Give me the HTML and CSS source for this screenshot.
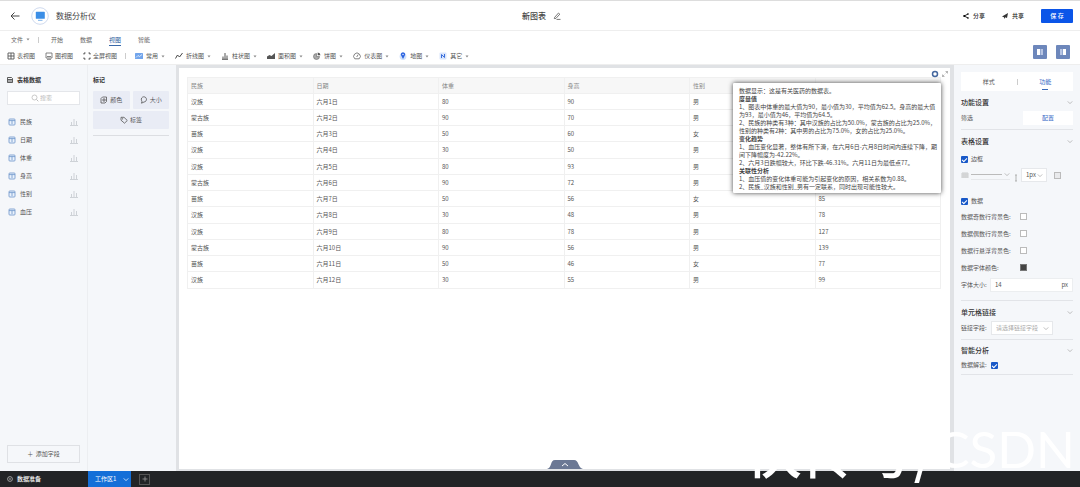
FILE: index.html
```html
<!DOCTYPE html>
<html>
<head>
<meta charset="utf-8">
<title>数据分析仪</title>
<link rel="stylesheet" href="styles.css">
</head>
<body>
<svg class="defs" aria-hidden="true">
  <symbol id="caret" viewBox="0 0 4 3"><path d="M.5 .5h3L2 2.4z" fill="#888"/></symbol>
  <symbol id="chev" viewBox="0 0 8 6"><path d="M1 1.5l3 3 3-3" fill="none" stroke="currentColor"/></symbol>
  <symbol id="bars" viewBox="0 0 8 8"><path d="M1.500 7V4M4 7V1M6.500 7V3M0 7.500h8" fill="none" stroke="currentColor" stroke-width=".8"/></symbol>
  <symbol id="field" viewBox="0 0 8 8"><rect x="1" y="1" width="6" height="6" rx=".8" fill="#eaf2fc" stroke="#6b93c9" stroke-width=".8"/><path d="M1 2.600h6M4 2.600v3.400" stroke="#6b93c9" stroke-width=".8"/></symbol>
</svg>
<div class="app">
  <header class="topbar">
    <div class="brand">
      <button class="plain" aria-label="返回"><svg class="back" viewBox="0 0 10 8"><path d="M4.500 .5L1 4l3.500 3.500M1 4h8.500" fill="none" stroke="#444"/></svg></button>
      <svg class="logo" viewBox="0 0 18 18"><circle cx="9" cy="9" r="8.300" fill="#fff" stroke="#c3d0ea" stroke-width=".8"/><rect x="4.800" y="4.800" width="9" height="7" rx=".6" fill="#3b8ee6"/><path d="M7 13.300h4.500" stroke="#7fb3ea" stroke-width="1"/></svg>
      <span>数据分析仪</span>
    </div>
    <div class="doc"><span>新图表</span><button class="plain" aria-label="重命名"><svg class="i8" viewBox="0 0 8 8"><path d="M1.500 5.500L5.500 1l1.300 1.200L3 6.300l-1.700.3zM3.500 7.400h4" fill="none" stroke="#555" stroke-width=".8"/></svg></button></div>
    <div class="actions">
      <button class="plain"><svg class="i6" viewBox="0 0 6 6"><path d="M5 1L1.200 3 5 5" fill="none" stroke="#222"/><circle cx="1.200" cy="3" r="1"/><circle cx="5" cy="1" r=".8"/><circle cx="5" cy="5" r=".8"/></svg>分享</button>
      <button class="plain"><svg class="i6" viewBox="0 0 6 6"><path d="M0 3.500L6 0 5 5 3.300 4.300 2.300 6 2 4.200z" fill="#333"/></svg>共享</button>
      <button class="save">保 存</button>
    </div>
  </header>
  <nav class="menu">
    <button class="plain">文件 <svg class="caret"><use href="#caret"/></svg></button>
    <i class="sep"></i>
    <div class="tabs">
      <button class="plain">开始</button><button class="plain">数据</button><button class="plain on">视图</button><button class="plain">智能</button>
    </div>
  </nav>
  <div class="tools">
    <div class="views">
      <button class="plain"><svg class="i8" viewBox="0 0 8 8"><path d="M1 1h6v6H1zM1 4h6M4 1v6" fill="none" stroke="#555" stroke-width=".9"/></svg>表视图</button>
      <button class="plain"><svg class="i8" viewBox="0 0 8 8"><path d="M1 1h6v5H1zM2 4.500h4M2 7.300h4" fill="none" stroke="#666" stroke-width=".8"/></svg>图视图</button>
      <button class="plain"><svg class="i8" viewBox="0 0 8 8"><path d="M1 2.500V1h1.500M5.500 1H7v1.500M7 5.500V7H5.500M2.500 7H1V5.500" fill="none" stroke="#444"/></svg>全屏视图</button>
    </div>
    <i class="sep"></i>
    <div class="charts">
      <button class="plain"><svg class="i8" viewBox="0 0 8 8"><rect y="1" width="8" height="6" rx=".6" fill="#72a5ec"/><path d="M1 5.500l2-2 1.500 1L7 2.500" fill="none" stroke="#fff" stroke-width=".7"/></svg>常用<svg class="caret"><use href="#caret"/></svg></button>
      <button class="plain"><svg class="i8" viewBox="0 0 8 8"><path d="M.5 6.500L2.500 3l2 2L7.500 1" fill="none" stroke="#444"/></svg>折线图<svg class="caret"><use href="#caret"/></svg></button>
      <button class="plain"><svg class="i8" viewBox="0 0 8 8"><path d="M2 7V4.500M4 7V1M6 7V3.500M1 7.300h6" fill="none" stroke="#555"/></svg>柱状图<svg class="caret"><use href="#caret"/></svg></button>
      <button class="plain"><svg class="i8" viewBox="0 0 8 8"><path d="M0 7V4.500L2.500 3 4.500 4 8 1v6z" fill="#555"/></svg>面积图<svg class="caret"><use href="#caret"/></svg></button>
      <button class="plain"><svg class="i8" viewBox="0 0 8 8"><path d="M3.500 1.500v3h3a3 3 0 1 1-3-3z" fill="#aaa" stroke="#666" stroke-width=".6"/><path d="M4.700 .5v2.700h2.800A3 3 0 0 0 4.700 .5z" fill="#555"/></svg>饼图<svg class="caret"><use href="#caret"/></svg></button>
      <button class="plain"><svg class="i8" viewBox="0 0 8 8"><path d="M1.800 6.800a3.300 3.300 0 1 1 4.400 0zM3.700 5L5.200 2.500" fill="none" stroke="#666" stroke-width=".8"/></svg>仪表图<svg class="caret"><use href="#caret"/></svg></button>
      <button class="plain"><svg class="i8" viewBox="0 0 8 8"><circle cx="4" cy="4.500" r="3.400" fill="#cfe0fb"/><path d="M4 7L2.200 3.400a2.100 2.100 0 1 1 3.600 0z" fill="#2b63e0"/><circle cx="4" cy="2.500" r=".7" fill="#fff"/></svg>地图<svg class="caret"><use href="#caret"/></svg></button>
      <button class="plain"><svg class="i8" viewBox="0 0 8 8"><rect x=".5" y=".5" width="7" height="7" rx="1" fill="#d9e5fb"/><path d="M2.500 6V2.500l3 3V2" fill="none" stroke="#3b6fdc"/></svg>其它<svg class="caret"><use href="#caret"/></svg></button>
    </div>
    <div class="toggles">
      <button aria-label="左侧面板"><svg class="i8" viewBox="0 0 8 8"><path d="M1 1h3v6H1z" fill="#fff"/><path d="M4.500 1H7v6H4.500z" fill="#b9c6e4"/></svg></button>
      <button aria-label="右侧面板"><svg class="i8" viewBox="0 0 8 8"><path d="M1 1h2.500v6H1z" fill="#b9c6e4"/><path d="M4 1h3v6H4z" fill="#fff"/></svg></button>
    </div>
  </div>
  <main class="body">
    <aside class="data">
      <h2><svg class="i6" viewBox="0 0 6 6"><path d="M.5 .5H4.500l1 1v4h-5zM1 2.500h4M1 4h4" fill="none" stroke="#333" stroke-width=".8"/></svg>表格数据</h2>
      <label class="search"><svg class="i8" viewBox="0 0 8 8"><circle cx="3.500" cy="3.500" r="2.500" fill="none" stroke="#bbb" stroke-width=".8"/><path d="M5.500 5.500L7.300 7.300" stroke="#bbb"/></svg><input type="text" placeholder="搜索" aria-label="搜索"></label>
      <ul>
        <li><svg class="i8"><use href="#field"/></svg>民族<svg class="i8 end"><use href="#bars"/></svg></li>
        <li><svg class="i8"><use href="#field"/></svg>日期<svg class="i8 end"><use href="#bars"/></svg></li>
        <li><svg class="i8"><use href="#field"/></svg>体重<svg class="i8 end"><use href="#bars"/></svg></li>
        <li><svg class="i8"><use href="#field"/></svg>身高<svg class="i8 end"><use href="#bars"/></svg></li>
        <li><svg class="i8"><use href="#field"/></svg>性别<svg class="i8 end"><use href="#bars"/></svg></li>
        <li><svg class="i8"><use href="#field"/></svg>血压<svg class="i8 end"><use href="#bars"/></svg></li>
      </ul>
      <button class="add">＋&nbsp; 添加字段</button>
    </aside>
    <aside class="marks">
      <h2>标记</h2>
      <div class="markgrid">
        <button><svg class="i8" viewBox="0 0 8 8"><path d="M2.500 1h4v4.500L5 7H1V2.500zM3 3h2v2H3z" fill="none" stroke="#555" stroke-width=".8"/></svg>颜色</button>
        <button><svg class="i8" viewBox="0 0 8 8"><path d="M2 5.200a2.600 2.600 0 1 1 2 .8L1.500 7.200z" fill="none" stroke="#555" stroke-width=".8"/></svg>大小</button>
        <button class="wide"><svg class="i8" viewBox="0 0 8 8"><path d="M1 1.300h3L7.300 4.500 4.500 7.200 1 4.200z" fill="none" stroke="#555" stroke-width=".8"/><circle cx="2.600" cy="2.800" r=".6" fill="#555"/></svg>标签</button>
      </div>
    </aside>
    <section class="canvas">
      <div class="corner">
        <svg class="i8" viewBox="0 0 8 8"><circle cx="4" cy="4" r="2.500" fill="#fff" stroke="#46689f" stroke-width="1.500"/></svg>
        <svg class="i6" viewBox="0 0 6 6"><path d="M3.500 .5h2v2M2.500 5.500h-2v-2M5.500 .5L3.700 2.300M.5 5.500l1.800-1.800" fill="none" stroke="#999" stroke-width=".7"/></svg>
      </div>
      <table>
        <thead><tr><th>民族</th><th>日期</th><th>体重</th><th>身高</th><th>性别</th><th>血压</th></tr></thead>
        <tbody>
          <tr><td>汉族</td><td>六月1日</td><td>80</td><td>90</td><td>男</td><td></td></tr>
          <tr><td>蒙古族</td><td>六月2日</td><td>90</td><td>70</td><td>男</td><td></td></tr>
          <tr><td>苗族</td><td>六月3日</td><td>50</td><td>60</td><td>女</td><td></td></tr>
          <tr><td>汉族</td><td>六月4日</td><td>30</td><td>50</td><td>男</td><td></td></tr>
          <tr><td>汉族</td><td>六月5日</td><td>80</td><td>93</td><td>男</td><td></td></tr>
          <tr><td>蒙古族</td><td>六月6日</td><td>90</td><td>72</td><td>男</td><td></td></tr>
          <tr><td>苗族</td><td>六月7日</td><td>50</td><td>56</td><td>女</td><td>85</td></tr>
          <tr><td>汉族</td><td>六月8日</td><td>30</td><td>48</td><td>男</td><td>78</td></tr>
          <tr><td>汉族</td><td>六月9日</td><td>80</td><td>78</td><td>男</td><td>127</td></tr>
          <tr><td>蒙古族</td><td>六月10日</td><td>90</td><td>56</td><td>男</td><td>139</td></tr>
          <tr><td>苗族</td><td>六月11日</td><td>50</td><td>46</td><td>女</td><td>77</td></tr>
          <tr><td>汉族</td><td>六月12日</td><td>30</td><td>55</td><td>男</td><td>99</td></tr>
        </tbody>
      </table>
      <div class="insight">
        <p>数据显示：这是有关医药的数据表。</p>
        <h3>度量值</h3>
        <p>1、图表中体重的最大值为90，最小值为30，平均值为62.5。身高的最大值<br>为93，最小值为46，平均值为64.5。</p>
        <p>2、民族的种类有3种：其中汉族的占比为50.0%，蒙古族的占比为25.0%，<br>性别的种类有2种：其中男的占比为75.0%，女的占比为25.0%。</p>
        <h3>变化趋势</h3>
        <p>1、血压变化显著，整体有所下滑，在六月6日-六月8日时间内连续下降，期<br>间下降幅度为-42.22%。</p>
        <p>2、六月3日跌幅较大，环比下跌-46.31%。六月11日为最低点77。</p>
        <h3>关联性分析</h3>
        <p>1、血压值的变化体重可能为引起变化的原因，相关系数为0.88。</p>
        <p>2、民族_汉族和性别_男有一定联系，同时出现可能性较大。</p>
      </div>
      <button class="drawer" aria-label="展开"><svg viewBox="0 0 36 9"><path d="M0 9C5 8 3 0 8 0H27C32 0 31 8 36 9z" fill="#6b7894"/><path d="M15 6l3-2.500L21 6" fill="none" stroke="#fff"/></svg></button>
    </section>
    <aside class="props">
      <div class="ptabs"><button class="plain">样式</button><i class="sep"></i><button class="plain on">功能</button></div>
      <section>
        <h2>功能设置<svg class="chev"><use href="#chev"/></svg></h2>
        <div class="row first"><span>筛选</span><button class="config">配置</button></div>
      </section>
      <section>
        <h2>表格设置<svg class="chev"><use href="#chev"/></svg></h2>
        <label class="row border"><input type="checkbox" checked>边框</label>
        <div class="row line">
          <svg class="i8" viewBox="0 0 8 8"><path d="M1 2h6M1 4h6M1 6h6M1 2v5M3 2v5M5 2v5M7 2v5" stroke="#bbb" stroke-width=".7"/></svg>
          <button class="style" aria-label="线型"><i></i><svg class="chev"><use href="#chev"/></svg></button>
          <svg class="i8 bar" viewBox="0 0 8 8"><path d="M3 1h2M4 1v6M3 7h2" stroke="#aaa" stroke-width=".9"/></svg>
          <span class="pick px"><select aria-label="线宽"><option>1px</option></select><svg class="chev"><use href="#chev"/></svg></span>
          <button class="swatch shade" aria-label="边框颜色"></button>
        </div>
        <label class="row datacheck"><input type="checkbox" checked>数据</label>
        <div class="row color"><span>数据奇数行背景色:</span><button class="swatch" aria-label="数据奇数行背景色"></button></div>
        <div class="row color"><span>数据偶数行背景色:</span><button class="swatch" aria-label="数据偶数行背景色"></button></div>
        <div class="row color"><span>数据行悬浮背景色:</span><button class="swatch" aria-label="数据行悬浮背景色"></button></div>
        <div class="row color"><span>数据字体颜色:</span><button class="swatch dark" aria-label="数据字体颜色"></button></div>
        <div class="row size"><label for="fs">字体大小:</label><span class="num"><input id="fs" type="text" value="14"><span>px</span></span></div>
      </section>
      <section>
        <h2>单元格链接<svg class="chev"><use href="#chev"/></svg></h2>
        <div class="row link"><label for="lk">链接字段:</label><span class="pick"><select id="lk"><option>请选择链接字段</option></select><svg class="chev"><use href="#chev"/></svg></span></div>
      </section>
      <section>
        <h2>智能分析<svg class="chev"><use href="#chev"/></svg></h2>
        <div class="row"><label for="rd">数据解读:</label><input id="rd" type="checkbox" checked></div>
      </section>
    </aside>
  </main>
  <footer>
    <button class="plain prep"><svg class="i6" viewBox="0 0 6 6"><circle cx="3" cy="3" r="2.400" fill="none" stroke="#bbb" stroke-width=".8"/><circle cx="3" cy="3" r=".8" fill="#bbb"/></svg>数据准备</button>
    <button class="sheet">工作区1<svg class="chev"><use href="#chev"/></svg></button>
    <button class="plus" aria-label="新建工作区"><svg class="i6" viewBox="0 0 6 6"><path d="M3 .5v5M.5 3h5" stroke="#999" stroke-width=".8"/></svg></button>
  </footer>
  <div class="mark">快传号/<span>CSDN</span></div>
</div>
</body>
</html>
```

FILE: styles.css
```css
* { box-sizing: border-box; margin: 0; padding: 0; }
body { font: 6px/8px "Noto Sans CJK SC", "Noto Sans", sans-serif; color: #555; background: #fff; }
button, input, select { font: inherit; color: inherit; border: 0; background: none; outline: 0; }
ul { list-style: none; }
svg { flex: none; display: block; }
.defs { display: none; }
.plain { display: flex; align-items: center; gap: 3px; white-space: nowrap; }
.i8 { width: 8px; height: 8px; }
.i6 { width: 6px; height: 6px; }
.caret { width: 4px; height: 3px; }
.chev { width: 8px; height: 6px; color: #aaa; }
.sep { width: 1px; height: 6px; background: #ccc; }

.app { position: relative; height: 100vh; display: flex; flex-direction: column; overflow: hidden; }
.topbar { height: 31px; flex: none; display: grid; grid-template-columns: 1fr auto 1fr; align-items: center; padding: 0 7px 0 10px; border-top: 1px solid #ddd; border-bottom: 1px solid #eee; }
.brand { display: flex; align-items: center; font-size: 8px; color: #444; }
.back { width: 10px; height: 8px; }
.logo { width: 18px; height: 18px; margin: 0 7px 0 11px; }
.doc { display: flex; align-items: center; gap: 7px; font-size: 8px; font-weight: 500; color: #444; }
.actions { display: flex; justify-content: flex-end; align-items: center; gap: 17px; color: #222; font-weight: 500; }
.actions .plain { gap: 4px; }
.save { width: 32px; height: 14px; border-radius: 1px; background: #0b55e8; color: #fff; }

.menu { height: 17px; flex: none; display: flex; align-items: center; padding-left: 11px; color: #666; }
.menu > .sep { margin: 0 12px 0 8px; }
.tabs { display: flex; gap: 17px; height: 100%; }
.tabs .on { color: #2c5c9c; box-shadow: inset 0 -2px #fff, inset 0 -3px #3a68a8; }
.tools { height: 17px; flex: none; display: flex; align-items: center; padding: 0 10px 0 7px; border-bottom: 1px solid #eee; }
.views { display: flex; gap: 10px; }
.views .plain { gap: 2px; }
.tools > .sep { margin: 0 9px 0 8px; }
.charts { display: flex; gap: 10px; }
.toggles { margin-left: auto; display: flex; gap: 9px; align-self: flex-end; padding-bottom: 5px; }
.toggles button { width: 14px; height: 14px; border-radius: 1px; background: #6d87bb; display: grid; place-items: center; }

.body { flex: 1; min-height: 0; display: flex; background: #f5f7fa; }
h2 { display: flex; align-items: center; font-size: 6px; font-weight: 700; color: #333; }
.data, .marks { width: 88px; flex: none; padding: 10px 7px 8px; display: flex; flex-direction: column; border-right: 1px solid #eceef1; }
.data h2 { gap: 4px; height: 9px; }
.search { display: flex; align-items: center; justify-content: center; gap: 1px; height: 14px; margin: 7px 0 8px; border: 1px solid #e4e6ea; background: #fff; }
.search input { width: 16px; }
.search input::placeholder { color: #bbb; }
.data li { display: flex; align-items: center; gap: 4px; height: 18px; padding: 0 2px 0 1px; }
.end { margin-left: auto; color: #c4c8ce; }
.add { margin-top: auto; height: 18px; border: 1px solid #dfe1e5; }
.marks { padding-left: 5px; border: 0; }
.marks h2 { height: 9px; }
.markgrid { margin-top: 7px; display: grid; grid-template-columns: 1fr 1fr; gap: 2px 3px; padding-bottom: 6px; border-bottom: 1px solid #dcdee2; }
.markgrid button { display: flex; align-items: center; justify-content: center; gap: 2px; height: 18px; background: #e9ecf5; border-radius: 1px; }
.markgrid .wide { grid-column: 1 / 3; }

.canvas { position: relative; flex: 1; background: #fff; border: solid #e0e2e5; border-width: 3px 4px 2px 3px; padding: 2px 9px 0 8px; }
.corner { display: flex; justify-content: flex-end; align-items: center; gap: 3px; height: 7px; margin-right: -7px; }
table { width: 100%; table-layout: fixed; border-collapse: collapse; }
th, td { height: 16px; border: 1px solid #f0f0f0; padding: 0 3px; text-align: left; font-weight: 400; line-height: 8px; }
th { background: #f7f7f7; color: #888; }
tbody tr:nth-child(4n) td { height: 17px; }
.insight { position: absolute; top: 15px; right: 9px; width: 208px; padding: 4px 6px 2px; background: #fff; border-radius: 1px; box-shadow: 0 0 5px #000b; white-space: nowrap; color: #444; overflow: hidden; }
h3 { font-size: 6px; line-height: 8px; font-weight: 700; }
.drawer { position: absolute; bottom: 0; left: 50%; width: 36px; height: 9px; margin-left: -18px; }

.props { width: 126px; flex: none; padding: 7px 7px 0; }
.ptabs { display: grid; grid-template-columns: 1fr auto 1fr; align-items: center; height: 19px; background: #fff; }
.ptabs .plain { justify-content: center; height: 100%; }
.ptabs .on { color: #2f66c5; background: linear-gradient(#3768b8, #3768b8) 50% 17px / 6px 1px no-repeat; }
.props section { padding: 3px 0 4px; border-bottom: 1px solid #e2e4e8; }
.props section:last-child { padding: 2px 0; }
.props h2 { height: 16px; font-size: 7px; font-weight: 500; justify-content: space-between; margin-bottom: 1px; }
.props section:last-child h2 { margin-bottom: 0; }
.props .chev { width: 6px; height: 5px; }
.row { display: flex; align-items: center; height: 14px; white-space: nowrap; }
.first { justify-content: space-between; }
.config { width: 50px; height: 14px; background: #fff; color: #2f66c5; }
input[type=checkbox] { appearance: none; width: 7px; height: 7px; border-radius: 1px; background: #1959c8; display: grid; place-items: center; }
input[type=checkbox]::after { content: ""; width: 4px; height: 2px; border: solid #fff; border-width: 0 0 1px 1px; transform: rotate(-45deg); }
.row input[type=checkbox] { margin-right: 3px; }
.row label + input[type=checkbox] { margin-left: 4px; }
.border { margin-top: 3px; }
.line { margin: 2px 0 12px; }
.style { display: flex; align-items: center; width: 39px; height: 10px; margin-left: 2px; border-bottom: 1px solid #e6e8eb; }
.style i { flex: 1; height: 1px; margin-right: 2px; background: #bbb; }
.bar { margin: 5px 1px 0 2px; }
.pick { display: grid; align-items: center; background: #fff; border: 1px solid #e6e8eb; height: 14px; width: 62px; color: #aaa; }
.pick > * { grid-area: 1 / 1; }
.pick select { appearance: none; width: 100%; height: 12px; padding-left: 4px; }
.pick .chev { justify-self: end; margin-right: 3px; pointer-events: none; }
.px { width: 26px; color: #555; }
.swatch { width: 7px; height: 7px; border: 1px solid #bbb; background: #fff; }
.shade { margin-left: 7px; background: #e9eaec; }
.dark { background: #444; border-color: #777; }
.color { height: 17px; }
.color span { width: 59px; }
.size { margin: 2px 0 4px; justify-content: space-between; }
.num { display: flex; align-items: center; width: 83px; height: 14px; padding: 0 4px; background: #fff; border: 1px solid #eceef0; }
.num input { flex: 1; min-width: 0; }
.link label { width: 30px; }

footer { height: 16px; flex: none; display: flex; align-items: center; background: #222426; color: #fff; }
.prep { width: 88px; padding-left: 7px; gap: 4px; font-weight: 500; }
.sheet { display: flex; align-items: center; justify-content: space-between; width: 43px; height: 16px; padding: 0 2px 0 7px; background: #146fd8; }
.sheet .chev { color: #fff; width: 6px; height: 5px; }
.plus { display: grid; place-items: center; width: 11px; height: 11px; margin-left: 8px; border: 1px solid #555; }
.mark { position: absolute; right: 5px; bottom: 6px; display: flex; align-items: baseline; font: 500 56px/56px "Noto Sans CJK SC", sans-serif; color: #fff; white-space: nowrap; pointer-events: none; }
.mark span { padding-bottom: 4px; align-self: flex-end; font: 400 51px/56px Lato, sans-serif; }
```
